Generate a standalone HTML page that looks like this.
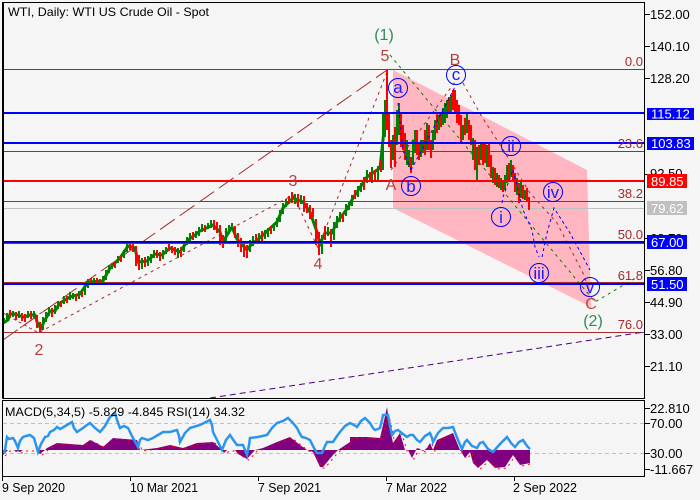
<!DOCTYPE html>
<html><head><meta charset="utf-8">
<style>
html,body{margin:0;padding:0;background:#f5f5f5;width:700px;height:500px;overflow:hidden}
svg{position:absolute;left:0;top:0}
text{font-family:"Liberation Sans",sans-serif}
.ax{font-size:13px;fill:#000}
.fib{font-size:13px;fill:#a52a2a;text-anchor:end}
.w{font-size:16px;text-anchor:middle}
.c{font-size:17px;fill:#1a1aff;text-anchor:middle}
.k{fill:none;stroke:#0000ff;stroke-width:1}
.wh{font-size:13px;fill:#fff}
</style></head>
<body>
<svg width="700" height="500" viewBox="0 0 700 500">
<rect x="0" y="0" width="700" height="500" fill="#f5f5f5"/>
<polygon points="393,70 587,170 591,307 393,208" fill="#ffb6c1"/>

<g fill="none" stroke="#a52a2a" stroke-width="1" shape-rendering="crispEdges">
<path d="M3 69.500H644M3 151.500H644M3 201.500H644M3 243.500H644M3 282.500H644M3 332.500H644"/>
</g>
<path d="M3 208.500H644" stroke="#c0c0c0" stroke-width="1"/>

<g fill="none" stroke="#a52a2a" stroke-width="1">
<path d="M3 340L387 70" stroke-dasharray="18 6"/>
<path d="M3 313L37 332M20 328L45 310" stroke-dasharray="3 3"/>
<path d="M40 332L293 195L318 248L387 72" stroke-dasharray="3 4"/>
<path d="M391 170L455 82" stroke-dasharray="3 4"/>
<path d="M463 83L482 117L497 140L530 193L557 223L583 273L588 287" stroke-dasharray="3 4"/>
</g>
<path d="M390 55L595 302L637 277" fill="none" stroke="#008000" stroke-dasharray="3 4"/>
<path d="M210 398L350 377L644 332" fill="none" stroke="#4b0082" stroke-dasharray="6 4"/>

<!-- price bars -->
<polyline fill="none" stroke="#008000" stroke-width="3" points="3,323 8,320 10,314 14,314 24,317 30,315 35,315 38,325 41,328 45,320 50,311 55,311 60,303 70,297 80,294 88,282 103,281 110,268 120,258 128,246 135,248 138,262 147,261 155,254 162,255 170,248 180,252 188,240 200,231 213,225 220,232 223,242 227,235 232,227 237,239 247,250 250,246 263,235 277,222 283,208 293,198 303,202 310,212 317,232 320,244 325,233 332,233 337,222 347,209 353,198 367,177 380,168 383,140 385,118"/>
<path fill="none" stroke="#008000" stroke-width="2" d="M4 318V324M7 313V322M13 311V317M19 311V318M28 311V318M34 311V318M43 317V330M46 312V322M49 307V316M55 305V314M58 301V309M64 296V304M70 292V300M73 293V299M79 291V299M85 286V295M88 279V288M94 278V283M103 276V284M106 270V280M109 265V273M112 263V269M118 256V263M124 250V258M127 243V252M142 258V269M148 256V266M151 254V263M154 250V258M163 250V259M166 247V254M178 248V258M184 242V252M187 237V245M190 233V241M196 231V238M199 227V236M202 224V232M208 223V229M211 220V228M226 228V243M229 225V234M232 223V230M250 240V252M253 236V246M259 233V241M265 230V239M268 228V237M274 223V231M277 218V227M280 210V222M283 203V214M286 199V207M295 194V204M301 195V204M322 235V254M328 227V236M334 222V240M337 216V228M340 212V222M346 204V216M349 201V210M352 195V206M358 186V197M361 183V192M367 170V183M372 167V183M378 166V180M383 113V170M385 100V137M393 135V160M397 110V145M399 103V135M407 140V165M409 150V167M413 140V165M415 130V153M421 140V157M423 140V153M427 123V150M433 130V150M435 120V140M439 115V130M443 108V125M445 103V123M447 100V118M451 95V112M463 125V140M467 113V133M473 138V160M477 147V180M481 143V160M487 145V167M493 167V183M497 173V187M501 178V190M505 175V190M507 165V183M511 160V177M517 178V195M521 182V198M525 190V200"/>
<path fill="none" stroke="#ff0000" stroke-width="2" d="M10 310V318M16 312V320M22 313V321M25 314V322M31 311V319M37 315V328M40 322V332M52 308V317M61 301V307M67 296V303M76 294V301M82 291V297M91 278V284M97 278V285M100 279V285M115 262V268M121 255V262M130 241V250M133 244V252M136 246V266M139 255V270M145 257V267M157 250V258M160 252V261M169 243V251M172 246V253M175 247V255M181 247V257M193 232V240M205 225V232M214 220V230M217 222V233M220 225V245M223 235V248M235 226V238M238 233V247M241 238V252M244 243V257M247 245V258M256 234V244M262 231V242M271 226V234M289 196V204M292 192V203M298 194V207M304 196V212M307 203V213M310 205V219M313 208V217M316 219V245M319 232V255M325 226V240M331 229V247M343 213V222M355 190V199M364 177V190M370 172V182M375 170V180M381 160V172M387 70V130M389 113V147M391 140V168M395 127V167M401 113V147M403 125V150M405 133V160M411 157V173M417 130V155M419 143V160M425 130V155M429 125V150M431 140V158M437 113V133M441 113V127M449 97V113M453 90V110M455 90V113M457 100V123M459 105V125M461 115V142M465 118V135M469 120V140M471 125V145M475 140V170M479 145V165M483 143V165M485 143V163M489 143V167M491 155V178M495 168V185M499 175V188M503 180V192M509 163V180M513 165V182M515 173V192M519 183V203M523 185V199M527 188V202M529 197V210"/>

<g fill="none" stroke="#0000ff" stroke-width="1" stroke-dasharray="3 3">
<path d="M398 103L403 150L411 170"/>
<path d="M411 170L435 125L456 85"/>
<path d="M502 203L503 197L513 170"/>
<path d="M513 170L523 210L532 230L535 247L539 257"/>
<path d="M542 257L547 233L554 208L570 233L590 270"/>
</g>

<g shape-rendering="crispEdges">
<rect x="3" y="112" width="641" height="2" fill="#0000ff"/>
<rect x="3" y="142" width="641" height="2" fill="#0000ff"/>
<rect x="3" y="180" width="641" height="2" fill="#ff0000"/>
<rect x="3" y="241" width="641" height="2" fill="#0000cd"/>
<rect x="3" y="283" width="641" height="2" fill="#0000ff"/>
</g>

<!-- fib -->
<text class="fib" x="643" y="66">0.0</text>
<text class="fib" x="643" y="148">23.6</text>
<text class="fib" x="643" y="198">38.2</text>
<text class="fib" x="643" y="239">50.0</text>
<text class="fib" x="643" y="280">61.8</text>
<text class="fib" x="643" y="329">76.0</text>

<!-- waves -->
<text class="w" x="384" y="40" fill="#2e8b57">(1)</text>
<text class="w" x="385" y="61" fill="#b5403a">5</text>
<text class="w" x="455" y="65" fill="#b5403a">B</text>
<text class="w" x="391" y="190" fill="#b5403a">A</text>
<text class="w" x="293" y="186" fill="#b5403a">3</text>
<text class="w" x="318" y="269" fill="#b5403a">4</text>
<text class="w" x="39" y="355" fill="#b5403a">2</text>
<text class="w" x="591" y="309" fill="#c8403a">C</text>
<text class="w" x="593" y="326" fill="#2e8b57">(2)</text>

<circle class="k" cx="456" cy="75" r="9.500"/><text class="c" x="456" y="80">c</text>
<circle class="k" cx="398" cy="88" r="9.500"/><text class="c" x="398" y="93">a</text>
<circle class="k" cx="411" cy="186" r="9.500"/><text class="c" x="411" y="192">b</text>
<circle class="k" cx="511" cy="146" r="9.500"/><text class="c" x="511" y="152">ii</text>
<circle class="k" cx="553" cy="192" r="9.500"/><text class="c" x="553" y="198">iv</text>
<circle class="k" cx="501" cy="217" r="9.500"/><text class="c" x="501" y="223">i</text>
<circle class="k" cx="539" cy="273" r="9.500"/><text class="c" x="539" y="279">iii</text>
<circle class="k" cx="590" cy="287" r="9.500"/><text class="c" x="590" y="293">v</text>

<text x="8" y="16" font-size="12" textLength="201" lengthAdjust="spacingAndGlyphs" fill="#000">WTI, Daily:  WTI US Crude Oil - Spot</text>

<!-- subwindow -->
<path d="M3 423.500H644M3 453.500H644" stroke="#c0c0c0" stroke-dasharray="4 3" fill="none"/>
<path fill="#800080" d="M3 450V455L8 450H13L20 452L23 450H37L40 454L45 450L47 448L57 443L83 445L90 440L100 445L103 447L113 438L137 440L140 450L157 448L170 445L183 448L197 443L213 442L222 450L224 453L227 450H235L238 454L247 459L255 450L263 448L277 442L290 437L300 445L307 450L313 452L320 467H323L333 455L338 450L350 442V437L367 437L380 438L383 425L387 407L390 428L393 443L400 433L405 450H408L412 458L417 448L423 451L427 448L430 443L433 450L437 440L453 433L460 450L465 458L470 452L473 463L478 468L487 460L495 468L505 467L513 455L520 465L530 463V450Z"/>
<path fill="none" stroke="#ff0000" stroke-dasharray="2 4" transform="translate(2,1)" d="M3 455L8 450H13L20 452L23 450H37L40 454L45 450L47 448L57 443L83 445L90 440L100 445L103 447L113 438L137 440L140 450L157 448L170 445L183 448L197 443L213 442L222 450L224 453L227 450H235L238 454L247 459L255 450L263 448L277 442L290 437L300 445L307 450L313 452L320 467H323L333 455L338 450L350 442V437L367 437L380 438L383 425L387 415L390 428L393 443L400 433L405 450H408L412 458L417 448L423 451L427 448L430 443L433 450L437 440L453 433L460 450L465 458L470 452L473 463L478 468L487 460L495 468L505 467L513 455L520 465L528 463"/>
<polyline fill="none" stroke="#2b95ee" stroke-width="2.500" points="3,453 5,450 7,437 9,439 13,438 15,441 18,448 20,441 23,437 26,436 30,435 34,438 38,452 41,444 45,437 48,436 50,432 54,430 57,427 60,429 62,428 67,425 72,422 74,428 77,432 80,430 83,428 87,425 90,423 95,428 100,432 105,426 110,417 113,415 115,413 117,420 120,428 124,426 128,428 133,438 138,447 140,440 142,438 148,440 153,438 158,435 163,432 170,432 177,430 179,436 180,442 185,433 190,428 200,425 210,420 212,425 213,432 217,440 222,450 226,440 230,435 234,441 237,445 243,445 245,450 247,455 249,445 250,438 258,437 267,435 272,428 277,423 283,421 288,418 293,423 297,428 300,434 302,437 306,438 310,440 314,448 317,453 322,453 325,446 327,442 333,442 337,436 340,432 345,426 350,423 354,425 357,427 361,421 365,418 368,421 370,423 373,428 375,430 378,429 380,428 382,420 383,415 388,415 390,426 392,435 395,431 398,430 403,434 407,437 410,435 413,435 417,440 420,442 425,436 430,433 432,438 433,442 438,433 443,428 448,428 453,427 458,440 462,449 465,442 467,440 472,446 477,448 480,443 483,442 488,449 493,452 500,444 507,437 511,443 515,447 519,442 523,440 527,446 530,449"/>

<!-- borders -->
<g fill="none" stroke="#000" stroke-width="1" shape-rendering="crispEdges">
<path d="M2.500 398.500V2.500H644.500V398.500H2.500"/>
<path d="M2.500 476.500V400.500H644.500V476.500H2.500"/>
<path d="M645 14.500H650M645 46.500H650M645 78.500H650M645 174.500H650M645 238.500H650M645 270.500H650M645 302.500H650M645 334.500H650M645 366.500H650"/>
<path d="M645 408.500H650M645 423.500H650M645 453.500H650M645 469.500H650"/>
<path d="M2.500 476V481M130.500 476V481M258.500 476V481M386.500 476V481M514.500 476V481"/>
</g>
<rect x="2" y="2" width="2" height="396" fill="#000"/>

<!-- axis labels -->
<text class="ax" x="650" y="19">152.00</text>
<text class="ax" x="650" y="51">140.10</text>
<text class="ax" x="650" y="83">128.20</text>
<text class="ax" x="650" y="275">56.80</text>
<text class="ax" x="650" y="307">44.90</text>
<text class="ax" x="650" y="339">33.00</text>
<text class="ax" x="650" y="371">21.10</text>
<text class="ax" x="650" y="178">92.50</text>
<text class="ax" x="650" y="243">68.70</text>

<rect x="647" y="108" width="47" height="12" fill="#0000ff"/><text class="wh" x="651" y="118.500">115.12</text>
<rect x="647" y="137" width="47" height="13" fill="#0000ff"/><text class="wh" x="651" y="148">103.83</text>
<rect x="647" y="174" width="40" height="14" fill="#ff0000"/><text class="wh" x="651" y="186">89.85</text>
<rect x="647" y="201" width="40" height="14" fill="#c0c0c0"/><text class="wh" x="651" y="213">79.62</text>
<rect x="647" y="235" width="40" height="14" fill="#0000ff"/><text class="wh" x="651" y="247">67.00</text>
<rect x="647" y="277" width="40" height="14" fill="#0000ff"/><text class="wh" x="651" y="289">51.50</text>

<text class="ax" x="650" y="413">22.810</text>
<text class="ax" x="650" y="428">70.00</text>
<text class="ax" x="650" y="458">30.00</text>
<text class="ax" x="650" y="474">-11.667</text>

<text x="5" y="416" font-size="12" textLength="240" lengthAdjust="spacingAndGlyphs" fill="#000">MACD(5,34,5) -5.829 -4.845 RSI(14) 34.32</text>

<text class="ax" x="2" y="492" textLength="63" lengthAdjust="spacingAndGlyphs">9 Sep 2020</text>
<text class="ax" x="130" y="492" textLength="68" lengthAdjust="spacingAndGlyphs">10 Mar 2021</text>
<text class="ax" x="258" y="492" textLength="63" lengthAdjust="spacingAndGlyphs">7 Sep 2021</text>
<text class="ax" x="386" y="492" textLength="61" lengthAdjust="spacingAndGlyphs">7 Mar 2022</text>
<text class="ax" x="513" y="492" textLength="64" lengthAdjust="spacingAndGlyphs">2 Sep 2022</text>
</svg>
</body></html>
